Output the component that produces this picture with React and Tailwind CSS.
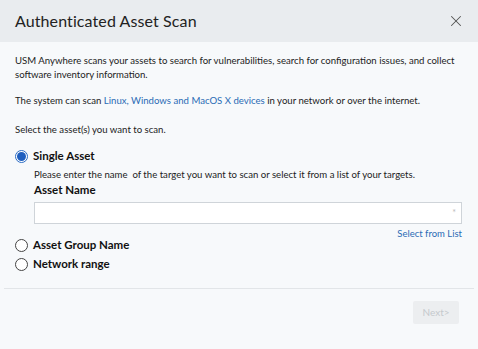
import { X } from "lucide-react";

function Radio({ checked, label }) {
  return (
    <label className="flex items-center gap-[5px]">
      {checked ? (
        <span className="w-[13px] h-[13px] rounded-full border border-[#2b6cc4] flex items-center justify-center bg-white">
          <span className="w-[9px] h-[9px] rounded-full bg-[#1f5fbf]" />
        </span>
      ) : (
        <span className="w-[13px] h-[13px] rounded-full border border-[#444] bg-white" />
      )}
      <span className="text-[11.5px] font-bold text-[#111]">{label}</span>
    </label>
  );
}

export default function App() {
  return (
    <div className="w-[478px] h-[349px] bg-[#f7f9fb] text-[#222]" style={{ fontFamily: "Lato, 'Open Sans', sans-serif" }}>
      <div className="h-[42px] bg-[#e9ecef] flex items-center justify-between pl-[15px] pr-[13px]">
        <h1 className="text-[16px] text-[#222] tracking-[0.1px]">Authenticated Asset Scan</h1>
        <X className="w-[18px] h-[18px] text-[#555]" strokeWidth={1.4} />
      </div>
      <div className="px-[15px] pt-[12px] text-[9.6px] leading-[14px]">
        <p>
          USM Anywhere scans your assets to search for vulnerabilities, search for configuration issues, and collect
          software inventory information.
        </p>
        <p className="mt-[12px]">
          The system can scan <span className="text-[#2a6bb5]">Linux, Windows and MacOS X devices</span> in your network or over the internet.
        </p>
        <p className="mt-[15px]">Select the asset(s) you want to scan.</p>
        <div className="mt-[12px]">
          <Radio checked label="Single Asset" />
        </div>
        <div className="pl-[19px] pr-[1px]">
          <p className="mt-[5px]">Please enter the name&nbsp; of the target you want to scan or select it from a list of your targets.</p>
          <p className="text-[11.5px] font-bold text-[#111] mt-[1px]">Asset Name</p>
          <div className="mt-[5px] h-[22px] bg-white border border-[#cfd4d9] flex items-center justify-end pr-[5px]">
            <span className="text-[9px] text-[#bbb]">*</span>
          </div>
          <div className="flex justify-end mt-[3px]">
            <span className="text-[9.5px] text-[#2a6bb5]">Select from List</span>
          </div>
        </div>
        <div className="flex flex-col gap-[5px] -mt-[3px]">
          <Radio label="Asset Group Name" />
          <Radio label="Network range" />
        </div>
      </div>
      <div className="mx-[4px] mt-[17px] border-t border-[#e2e5e8]" />
      <div className="flex justify-end pr-[19px] pt-[12px]">
        <button className="w-[46px] h-[23px] bg-[#eceef0] text-[10px] text-[#c5c9cd] rounded-[2px]">Next&gt;</button>
      </div>
    </div>
  );
}
